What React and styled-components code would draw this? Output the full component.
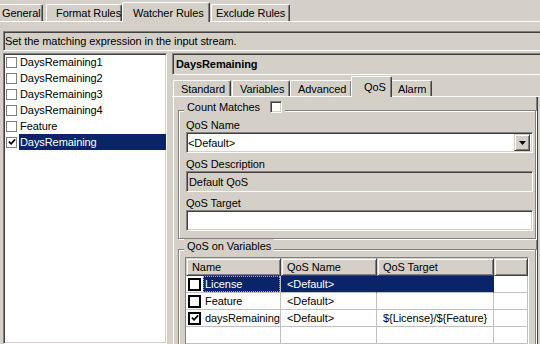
import React from "react";
import styled, { createGlobalStyle, css } from "styled-components";

const FACE = "#d4d0c8";
const SHADOW = "#808080";
const DARK = "#404040";
const NAVY = "#0a246a";
const GRID = "#c0c0c0";

const GlobalStyle = createGlobalStyle`
  html, body { margin: 0; padding: 0; }
  body {
    background: ${FACE};
    font-family: "Liberation Sans", Arial, sans-serif;
    font-size: 11px;
    letter-spacing: -0.08px;
    color: #000;
  }
  * { box-sizing: border-box; }
`;

const sunken = css`
  border-top: 1px solid ${SHADOW};
  border-left: 1px solid ${SHADOW};
  border-right: 1px solid #fff;
  border-bottom: 1px solid #fff;
  box-shadow: inset 1px 1px 0 ${DARK}, inset -1px -1px 0 ${FACE};
`;

const raised = css`
  border-top: 1px solid ${FACE};
  border-left: 1px solid ${FACE};
  border-right: 1px solid ${DARK};
  border-bottom: 1px solid ${DARK};
  box-shadow: inset 1px 1px 0 #fff, inset -1px -1px 0 ${SHADOW};
`;

const Window = styled.div`
  width: 540px;
  height: 344px;
  overflow: hidden;
  background: ${FACE};
  display: flex;
  flex-direction: column;
`;

const TabStrip = styled.div`
  flex: none;
  display: flex;
  align-items: flex-end;
  height: ${(p) => p.$h}px;
  border-bottom: 1px solid #fff;
`;

const Tab = styled.div`
  flex: none;
  width: ${(p) => p.$w}px;
  height: ${(p) => p.$h}px;
  margin-left: ${(p) => p.$ml || 0}px;
  margin-bottom: ${(p) => (p.$active ? -1 : 0)}px;
  padding-left: ${(p) => p.$pl}px;
  background: ${FACE};
  border-top: 1px solid #fff;
  border-left: 1px solid #fff;
  border-right: 1px solid ${DARK};
  box-shadow: inset -1px 0 0 ${SHADOW};
  border-top-left-radius: 2px;
  border-top-right-radius: 2px;
  display: flex;
  align-items: center;
  white-space: nowrap;
  overflow: hidden;
  position: relative;
  z-index: ${(p) => (p.$active ? 1 : 0)};
`;

const StatusField = styled.div`
  flex: none;
  height: 20px;
  margin: 9px -10px 0 3px;
  padding-left: 1px;
  ${sunken};
  display: flex;
  align-items: center;
`;

const Main = styled.div`
  flex: 1;
  min-height: 0;
  display: flex;
  margin-top: 1px;
  padding-left: 3px;
`;

const List = styled.div`
  flex: none;
  width: 164px;
  margin-top: 1px;
  background: #fff;
  ${sunken};
  display: flex;
  flex-direction: column;
`;

const ListRow = styled.div`
  height: 16px;
  display: flex;
  align-items: center;
  padding-left: 2px;
`;

const ListLabel = styled.span`
  flex: 1;
  height: 16px;
  margin-left: 2px;
  padding-left: 1px;
  display: flex;
  align-items: center;
  background: ${(p) => (p.$sel ? NAVY : "transparent")};
  color: ${(p) => (p.$sel ? "#fff" : "#000")};
`;

const FlatBox = styled.span`
  flex: none;
  width: 11px;
  height: 11px;
  border: 1px solid ${SHADOW};
  background: #fff;
  display: flex;
  align-items: center;
  justify-content: center;
`;

const RightCol = styled.div`
  flex: 1;
  min-width: 0;
  margin-left: 5px;
  display: flex;
  flex-direction: column;
`;

const Header = styled.div`
  flex: none;
  height: 22px;
  margin-top: 1px;
  margin-right: -10px;
  padding-left: 3px;
  ${sunken};
  font-weight: bold;
  display: flex;
  align-items: center;
`;

const InnerStrip = styled(TabStrip)`
  margin-top: 1px;
`;

const Panel = styled.div`
  flex: 1;
  min-height: 0;
  margin: 0 2px 0 1px;
  padding: 13px 1px 0 4px;
  border-left: 1px solid #fff;
  border-right: 1px solid ${DARK};
  box-shadow: inset -1px 0 0 ${SHADOW};
  display: flex;
  flex-direction: column;
`;

const Group = styled.div`
  flex: none;
  position: relative;
  margin-top: ${(p) => p.$mt || 0}px;
  padding: ${(p) => p.$pad};
  border: 1px solid ${SHADOW};
  box-shadow: 1px 1px 0 #fff, inset 1px 1px 0 #fff;
  display: flex;
  flex-direction: column;
`;

const Caption = styled.div`
  position: absolute;
  left: 5px;
  top: -11px;
  height: 13px;
  padding: 0 3px;
  background: ${FACE};
  display: flex;
  align-items: center;
  gap: 10px;
`;

const SunkBox = styled.span`
  flex: none;
  width: 12px;
  height: 12px;
  background: #fff;
  border-top: 1px solid ${SHADOW};
  border-left: 1px solid ${SHADOW};
  border-right: 1px solid #fff;
  border-bottom: 1px solid #fff;
  box-shadow: inset 1px 1px 0 ${DARK}, inset -1px -1px 0 ${FACE};
`;

const FieldLabel = styled.div`
  height: 13px;
  line-height: 13px;
  margin-top: ${(p) => (p.$first ? 0 : 5)}px;
`;

const Field = styled.div`
  height: 21px;
  ${sunken};
  background: ${(p) => (p.$ro ? FACE : "#fff")};
  display: flex;
  align-items: center;
  padding: 0 2px 0 ${(p) => (p.$combo ? 1 : 2)}px;
`;

const FieldText = styled.span`
  flex: 1;
`;

const DropButton = styled.span`
  flex: none;
  width: 16px;
  height: 17px;
  ${raised};
  background: ${FACE};
  display: flex;
  align-items: center;
  justify-content: center;
`;

const Table = styled.div`
  ${sunken};
  background: #fff;
  height: 120px;
`;

const GridRow = styled.div`
  display: grid;
  grid-template-columns: 95px 96px 117px 1fr;
  height: ${(p) => p.$h}px;
`;

const HeadCell = styled.div`
  ${raised};
  background: ${FACE};
  padding-left: 5px;
  display: flex;
  align-items: center;
  white-space: nowrap;
`;

const Cell = styled.div`
  border-right: 1px solid ${(p) => (p.$sel ? NAVY : GRID)};
  border-bottom: 1px solid ${GRID};
  background: ${(p) => (p.$sel ? NAVY : "#fff")};
  color: ${(p) => (p.$sel ? "#fff" : "#000")};
  padding-left: ${(p) => p.$pl ?? 6}px;
  display: flex;
  align-items: center;
  white-space: nowrap;
  overflow: hidden;
`;

const NameText = styled.span`
  flex: 1;
  align-self: stretch;
  margin-left: 2px;
  padding-left: 2px;
  display: flex;
  align-items: center;
  background: ${(p) => (p.$sel ? NAVY : "transparent")};
  color: ${(p) => (p.$sel ? "#fff" : "#000")};
  outline: ${(p) => (p.$sel ? `1px dotted #b8ae78` : "none")};
  outline-offset: -1px;
`;

const BlackBox = styled.span`
  flex: none;
  width: 13px;
  height: 13px;
  border: 2px solid #000;
  background: #fff;
  display: flex;
  align-items: center;
  justify-content: center;
`;

const Check = ({ s = 9 }) => (
  <svg width={s} height={s} viewBox="0 0 9 9">
    <path d="M1 4 L3.5 6.5 L8 1.5" stroke="#000" strokeWidth="2" fill="none" />
  </svg>
);

const DownArrow = () => (
  <svg width="7" height="4" viewBox="0 0 7 4">
    <path d="M0 0 H7 L3.5 4 Z" fill="#000" />
  </svg>
);

const topTabs = [
  { label: "General", w: 47, ml: -4, pl: 5 },
  { label: "Format Rules", w: 76, ml: 3, pl: 9 },
  { label: "Watcher Rules", w: 88, ml: 0, pl: 10, active: true },
  { label: "Exclude Rules", w: 79, ml: 1, pl: 4 },
];

const innerTabs = [
  { label: "Standard", w: 58, ml: 1, pl: 7 },
  { label: "Variables", w: 58, ml: 1, pl: 7 },
  { label: "Advanced", w: 62, ml: 0, pl: 7 },
  { label: "QoS", w: 41, ml: -1, pl: 12, active: true },
  { label: "Alarm", w: 41, ml: -1, pl: 6 },
];

const listItems = [
  { label: "DaysRemaining1" },
  { label: "DaysRemaining2" },
  { label: "DaysRemaining3" },
  { label: "DaysRemaining4" },
  { label: "Feature" },
  { label: "DaysRemaining", checked: true, sel: true },
];

const vars = [
  { name: "License", qos: "<Default>", target: "", sel: true },
  { name: "Feature", qos: "<Default>", target: "" },
  { name: "daysRemaining", qos: "<Default>", target: "${License}/${Feature}", checked: true },
];

export default function App() {
  return (
    <>
      <GlobalStyle />
      <Window>
        <TabStrip $h={22}>
          {topTabs.map((t) => (
            <Tab key={t.label} $w={t.w} $ml={t.ml} $pl={t.pl} $active={t.active} $h={t.active ? 20 : 17}>
              {t.label}
            </Tab>
          ))}
        </TabStrip>
        <StatusField>Set the matching expression in the input stream.</StatusField>
        <Main>
          <List>
            {listItems.map((it) => (
              <ListRow key={it.label}>
                <FlatBox>{it.checked && <Check s={8} />}</FlatBox>
                <ListLabel $sel={it.sel}>{it.label}</ListLabel>
              </ListRow>
            ))}
          </List>
          <RightCol>
            <Header>DaysRemaining</Header>
            <InnerStrip $h={21}>
              {innerTabs.map((t) => (
                <Tab key={t.label} $w={t.w} $ml={t.ml} $pl={t.pl} $active={t.active} $h={t.active ? 21 : 16}>
                  {t.label}
                </Tab>
              ))}
            </InnerStrip>
            <Panel>
              <Group $pad="8px 2px 7px 7px">
                <Caption>
                  Count Matches
                  <SunkBox />
                </Caption>
                <FieldLabel $first>QoS Name</FieldLabel>
                <Field $combo>
                  <FieldText>&lt;Default&gt;</FieldText>
                  <DropButton>
                    <DownArrow />
                  </DropButton>
                </Field>
                <FieldLabel>QoS Description</FieldLabel>
                <Field $ro>Default QoS</Field>
                <FieldLabel>QoS Target</FieldLabel>
                <Field />
              </Group>
              <Group $mt={10} $pad="7px 6px 20px 6px">
                <Caption>QoS on Variables</Caption>
                <Table>
                  <GridRow $h={18}>
                    <HeadCell>Name</HeadCell>
                    <HeadCell>QoS Name</HeadCell>
                    <HeadCell>QoS Target</HeadCell>
                    <HeadCell />
                  </GridRow>
                  {vars.map((v) => (
                    <GridRow $h={17} key={v.name}>
                      <Cell $pl={2}>
                        <BlackBox>{v.checked && <Check s={8} />}</BlackBox>
                        <NameText $sel={v.sel}>{v.name}</NameText>
                      </Cell>
                      <Cell $sel={v.sel}>{v.qos}</Cell>
                      <Cell $sel={v.sel}>{v.target}</Cell>
                      <Cell />
                    </GridRow>
                  ))}
                  <GridRow $h={17}>
                    <Cell />
                    <Cell />
                    <Cell />
                    <Cell />
                  </GridRow>
                </Table>
              </Group>
            </Panel>
          </RightCol>
        </Main>
      </Window>
    </>
  );
}
